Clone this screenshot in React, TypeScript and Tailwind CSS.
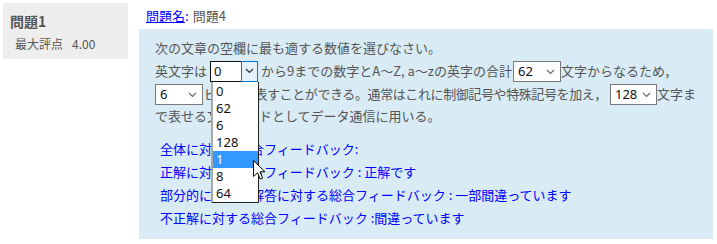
import React from "react";

const jp = "font-['Noto_Sans_CJK_JP',sans-serif]";

function Chevron({ color = "#6b6b6b" }: { color?: string }) {
  return (
    <svg width="9" height="6" viewBox="0 0 9 6" className="block">
      <polyline points="1,1 4.5,4.5 8,1" fill="none" stroke={color} strokeWidth="1.2" />
    </svg>
  );
}

function Sel({ v, w = 48 }: { v: string; w?: number }) {
  return (
    <span
      className="relative inline-flex h-[21px] items-center border border-[#7a7a7a] bg-white align-middle font-['Noto_Sans','Liberation_Sans',sans-serif] text-[13px] leading-none tracking-normal text-[#111]"
      style={{ width: w }}
    >
      <span className="pl-[4px]">{v}</span>
      <span className="absolute right-[5px] top-[7px]">
        <Chevron />
      </span>
    </span>
  );
}

function Cursor() {
  return (
    <svg width="13" height="20" viewBox="0 0 13 20" className="absolute left-[40px] top-[78px]">
      <path
        d="M0.5 0.5 L0.5 16.5 L4.5 12.8 L7.2 19 L9.6 18 L7 11.8 L12 11.8 Z"
        fill="#fff"
        stroke="#000"
        strokeWidth="1"
        strokeLinejoin="miter"
      />
    </svg>
  );
}

function FocusedSel() {
  const items = ["0", "62", "6", "128", "1", "8", "64"];
  return (
    <span className="relative mx-[3px] inline-flex h-[21px] w-[48px] items-stretch border border-[#111] bg-white align-middle font-['Noto_Sans','Liberation_Sans',sans-serif] text-[13px] leading-none text-[#111]">
      <span className="flex flex-1 items-center pl-[3px]">0</span>
      <span className="-my-px -mr-px flex w-[17px] items-center justify-center border border-[#0078d7] bg-[#e5f1fb]">
        <Chevron color="#333" />
      </span>
      <div className="absolute left-0 top-[20px] z-10 w-[48px] border-b border-r border-l-2 border-b-[#222] border-r-[#222] border-l-[#a8a8a8] bg-white pt-[1px]">
        {items.map((it) => (
          <div
            key={it}
            className={
              "flex h-[17px] items-center pl-[3px] " +
              (it === "1" ? "bg-[#3399ff] text-white" : "text-[#111]")
            }
          >
            {it}
          </div>
        ))}
        <Cursor />
      </div>
    </span>
  );
}

export default function App() {
  return (
    <div className={`flex min-h-[244px] w-[717px] bg-white pl-[3px] pt-[3px] ${jp}`}>
      <div className="h-[56px] w-[125px] shrink-0 bg-[#eeeeee]">
        <div className="pl-[7px] pt-[9px] text-[14px] font-bold leading-[18px] text-[#555]">問題1</div>
        <div className="flex pl-[12px] pt-[6px] text-[12px] leading-[16px] text-[#555]">
          <span>最大評点</span>
          <span className="ml-[9px]">4.00</span>
        </div>
      </div>
      <div className="ml-[11px] w-[574px] shrink-0">
        <div className="flex h-[26px] items-center pl-[7px] text-[13px] text-[#555]">
          <span className="text-[#0000ff] underline decoration-1 underline-offset-[1px]">問題名</span>
          <span className="text-[#0000ff]">:</span>
          <span className="ml-[4px]">問題4</span>
        </div>
        <div className="bg-[#d9ecf5] pb-[10px] pl-[16px] pt-[7px] text-[13px] text-[#555]">
          <div className="flex h-[23px] items-center whitespace-nowrap">次の文章の空欄に最も適する数値を選びなさい。</div>
          <div className="flex h-[24px] items-center whitespace-nowrap">
            <span>英文字は</span>
            <FocusedSel />
            <span>から9までの数字とA〜Z, a〜zの英字の合計</span>
            <span className="ml-[1px]">
              <Sel v="62" />
            </span>
            <span>文字からなるため，</span>
          </div>
          <div className="flex h-[22px] items-center whitespace-nowrap">
            <Sel v="6" />
            <span className="ml-[1px] tracking-[-0.4px]">ビットで表すことができる。通常はこれに制御記号や特殊記号を加え，</span>
            <span className="ml-[3px]">
              <Sel v="128" w={47} />
            </span>
            <span>文字ま</span>
          </div>
          <div className="flex h-[22px] items-center whitespace-nowrap">で表せる文字コードとしてデータ通信に用いる。</div>
          <div className="mt-[10px] pl-[5px] text-[#0000ff]">
            <div className="flex h-[23px] items-center whitespace-nowrap">全体に対する総合フィードバック:</div>
            <div className="flex h-[23px] items-center whitespace-nowrap">正解に対する総合フィードバック : 正解です</div>
            <div className="flex h-[23px] items-center whitespace-nowrap">部分的に正しい解答に対する総合フィードバック : 一部間違っています</div>
            <div className="flex h-[23px] items-center whitespace-nowrap">不正解に対する総合フィードバック :間違っています</div>
          </div>
        </div>
      </div>
    </div>
  );
}
